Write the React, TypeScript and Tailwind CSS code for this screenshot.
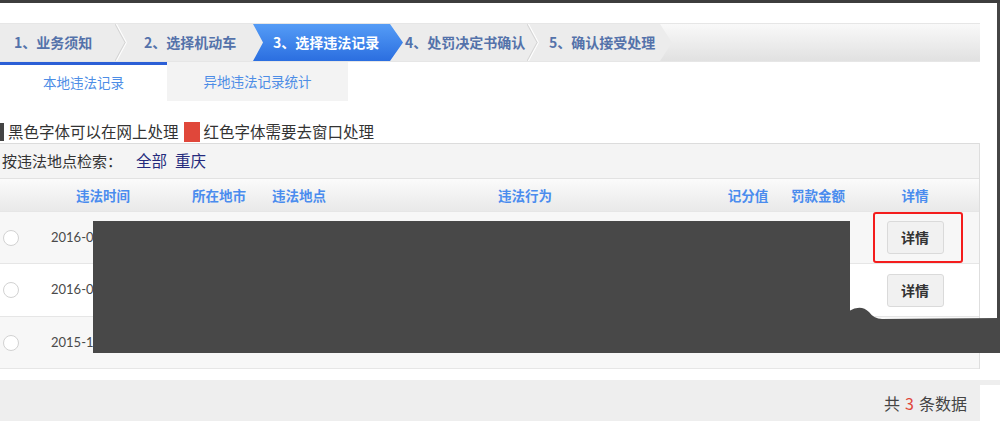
import React from 'react';

const steps = [
  { label: '1、业务须知', w: 'w-[115px]', pl: 'pl-[14px]', sep: true },
  { label: '2、选择机动车', w: 'w-[126px]', pl: 'pl-[17px]', sep: false },
];

const rows = [
  { date: '2016-0', bg: 'bg-[#f7f7f7]', h: 'h-[52px]', btn: true },
  { date: '2016-0', bg: 'bg-white', h: 'h-[53px]', btn: true },
  { date: '2015-1', bg: 'bg-[#f7f7f7]', h: 'h-[53px]', btn: false },
];

const cols = ['', '违法时间', '所在地市', '违法地点', '违法行为', '记分值', '罚款金额', '详情', ''];

const Sep = () => (
  <svg width="12" height="37" viewBox="0 0 12 37" className="shrink-0">
    <polyline points="0,0 10,18.5 0,37" fill="none" stroke="#d4d4d4" strokeWidth="1" />
    <polyline points="1.5,0 11.5,18.5 1.5,37" fill="none" stroke="#ffffff" strokeWidth="1" />
  </svg>
);

export default function App() {
  return (
    <div className="relative w-[1000px] h-[423px] overflow-hidden bg-white font-['Noto_Sans_CJK_SC',sans-serif]">
      <div className="h-[3px] bg-[#3d3d3d]" />

      <div className="flex">
        <div className="w-[980px] pt-[20px]">
          {/* steps */}
          <div className="h-[39px] border-y border-[#e6e6e6] bg-[#ececec] flex text-[14px] font-bold text-[#5472aa]">
            {steps.map((s) => (
              <React.Fragment key={s.label}>
                <div className={`${s.w} ${s.pl} flex items-center`}>{s.label}</div>
                {s.sep && <Sep />}
              </React.Fragment>
            ))}
            <div className="w-[150px] pl-[20px] flex items-center text-white bg-gradient-to-b from-[#559cf6] to-[#2b6ee0] [clip-path:polygon(0_0,137px_0,150px_50%,137px_100%,0_100%,10px_50%)]">
              3、选择违法记录
            </div>
            <div className="w-[124px] pl-[2px] flex items-center">4、处罚决定书确认</div>
            <Sep />
            <div className="w-[121px] pl-[10px] flex items-center">5、确认接受处理</div>
            <div className="flex-1 bg-gradient-to-b from-[#f9f9f9] to-[#e1e1e1] [clip-path:polygon(0_0,100%_0,100%_100%,0_100%,12px_50%)]" />
          </div>

          {/* tabs */}
          <div className="flex h-[39px] text-[13.5px] text-[#4d8de6]">
            <div className="w-[167px] bg-white border-t-[3px] border-[#2c5fd6] flex items-center justify-center pb-[2px]">
              本地违法记录
            </div>
            <div className="w-[181px] bg-[#f3f3f3] flex items-center justify-center">异地违法记录统计</div>
          </div>

          {/* legend */}
          <div className="mt-[20px] h-[21px] flex items-center text-[15.5px] text-[#333]">
            <span className="w-[4px] h-[18px] bg-[#444]" />
            <span className="ml-[4px]">黑色字体可以在网上处理</span>
            <span className="ml-[5px] w-[16px] h-[20px] bg-[#e0473a]" />
            <span className="ml-[4px]">红色字体需要去窗口处理</span>
          </div>

          {/* panel */}
          <div className="mt-[1px] border-r border-[#dedede]">
            <div className="h-[35px] border-t border-[#dcdcdc] bg-[#f4f4f4] flex items-center pl-[2px] text-[15px]">
              <span className="text-[#333]">按违法地点检索：</span>
              <span className="ml-[14px] text-[#242a7c] text-[15.5px]">全部</span>
              <span className="ml-[8px] text-[#242a7c] text-[15.5px]">重庆</span>
            </div>

            <div className="grid grid-cols-[35px_136px_96px_64px_388px_58px_82px_112px_1fr] h-[33px] border-t border-[#e2e2e2] bg-gradient-to-b from-[#fbfbfb] to-[#e9e9e9] text-[13.5px] font-bold text-[#4a8cee]">
              {cols.map((c, i) => (
                <div key={i} className="flex items-center justify-center">{c}</div>
              ))}
            </div>

            {rows.map((r, i) => (
              <div
                key={i}
                className={`grid grid-cols-[35px_136px_96px_64px_388px_58px_82px_112px_1fr] ${r.h} ${r.bg} border-t border-[#e6e6e6] ${i === 2 ? 'border-b' : ''}`}
              >
                <div className="flex items-center">
                  <span className="ml-[3px] w-[16px] h-[16px] rounded-full border border-[#d2d2d2] bg-white" />
                </div>
                <div className="flex items-center pl-[16px] text-[13px] text-[#4a4a4a] font-['Lato',sans-serif]">{r.date}</div>
                <div />
                <div />
                <div />
                <div />
                <div />
                <div className="flex items-center justify-center">
                  {r.btn && (
                    <div className="relative w-[57px] h-[33px] rounded-[3px] border border-[#dadada] bg-[#f1f1f1] flex items-center justify-center text-[14px] font-bold text-[#333]">
                      详情
                      {i === 0 && (
                        <span className="absolute left-[-15px] top-[-10px] w-[90px] h-[51px] rounded-[3px] border-2 border-[#f41d1d]" />
                      )}
                    </div>
                  )}
                </div>
                <div />
              </div>
            ))}
          </div>
        </div>

        <div className="flex-1 flex justify-end">
          <div className="w-[3px] h-[317px] bg-[#454545]" />
        </div>
      </div>

      {/* footer */}
      <div className="mt-[11px] flex h-[41px]">
        <div className="w-[980px] bg-[#eeeeee] flex items-center justify-end pr-[13px] pt-[5px] text-[16px] text-[#444]">
          <span>共</span>
          <span className="mx-[5px] text-[#e0473a]">3</span>
          <span>条数据</span>
        </div>
        <div className="flex-1 flex flex-col">
          <div className="h-[5px] bg-[#eeeeee]" />
          <div className="flex-1 bg-white" />
        </div>
      </div>

      {/* redaction */}
      <div className="absolute left-[93px] top-[221px] w-[757px] h-[132px] bg-[#484848]" />
      <svg className="absolute left-0 top-0" width="1000" height="423" viewBox="0 0 1000 423">
        <path d="M849,353 L849,311 Q861,304 869,312 Q874,319 882,319 L1000,318 L1000,353 Z" fill="#484848" />
      </svg>
    </div>
  );
}
